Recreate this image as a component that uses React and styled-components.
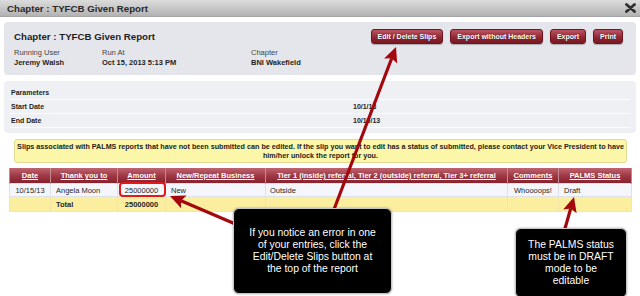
import React from "react";
import styled, { createGlobalStyle } from "styled-components";

const GlobalStyle = createGlobalStyle`
  html, body { margin: 0; padding: 0; background: #fff; }
  body { font-family: "Liberation Sans", Arial, sans-serif; color: #222; }
`;

const Page = styled.div`
  position: relative;
  width: 640px;
  height: 296px;
  overflow: hidden;
  background: #fff;
`;

const TitleBar = styled.div`
  height: 17px;
  display: flex;
  align-items: center;
  justify-content: space-between;
  padding: 0 4px 0 7px;
  background: linear-gradient(#dcdcdc, #b2b2b2);
  border-bottom: 1px solid #a5a5a5;
  box-sizing: border-box;
`;

const TitleText = styled.div`
  font-size: 9.7px;
  font-weight: bold;
  color: #2a2a2a;
`;

const Body = styled.div`
  display: flex;
  flex-direction: column;
  gap: 6px;
  padding: 5px 4px 0;
`;

const ReportPanel = styled.div`
  background: #e5e6eb;
  border-radius: 4px;
  padding: 7px 13px 8px 10px;
`;

const PanelHead = styled.div`
  display: flex;
  align-items: center;
  justify-content: space-between;
  height: 15px;
`;

const Heading = styled.div`
  font-size: 9.7px;
  font-weight: bold;
  color: #1e1e1e;
`;

const ButtonRow = styled.div`
  display: flex;
  gap: 7px;
`;

const RedButton = styled.div`
  height: 15px;
  box-sizing: border-box;
  padding: 0 6px;
  display: flex;
  align-items: center;
  border-radius: 3px;
  border: 1px solid #6e1520;
  background: linear-gradient(#bb5561, #8e2531 60%, #7a1823);
  color: #fff;
  font-size: 7px;
  font-weight: bold;
  text-shadow: 0 0 1px rgba(0,0,0,0.6);
  box-shadow: 0 1px 1px rgba(0,0,0,0.25);
  white-space: nowrap;
`;

const InfoGrid = styled.div`
  display: grid;
  grid-template-columns: 88px 149px 1fr;
  margin-top: 4px;
  font-size: 7.5px;
  line-height: 9.5px;
`;

const InfoLabel = styled.div`
  color: #444;
`;

const InfoValue = styled.div`
  font-weight: bold;
  color: #1e1e1e;
`;

const ParamPanel = styled.div`
  background: #eef0f3;
  border-radius: 4px;
  padding: 5px 6px;
`;

const ParamRow = styled.div`
  display: grid;
  grid-template-columns: 342px 1fr;
  align-items: center;
  height: 13px;
  border-bottom: 1px solid #fbfcfd;
  padding-left: 1px;
  font-size: 7px;
  font-weight: bold;
  color: #1e1e1e;
`;

const Notice = styled.div`
  margin: 0 9px 0 10px;
  height: 24px;
  box-sizing: border-box;
  background: #fcf6a8;
  border: 1px solid #e2db95;
  border-radius: 3px;
  display: flex;
  align-items: center;
  justify-content: center;
  text-align: center;
  font-size: 7.2px;
  line-height: 9px;
  font-weight: bold;
  color: #222;
  white-space: nowrap;
`;

const Table = styled.table`
  margin: -1px 5px 0;
  width: 622px;
  border-collapse: collapse;
  table-layout: fixed;
  font-size: 7.5px;
`;

const HeadCell = styled.th`
  height: 15px;
  padding: 0;
  background: linear-gradient(#c06470, #9c3642 55%, #86222e);
  border-left: 1px solid #c88890;
  border-right: 1px solid #c88890;
  color: #fff;
  font-weight: bold;
  text-decoration: underline;
  text-align: center;
  white-space: nowrap;
`;

const Cell = styled.td`
  height: ${(p) => (p.$total ? "14px" : "12px")};
  padding: 0 0 0 ${(p) => p.$pad || 0}px;
  background: ${(p) => (p.$total ? "#fcee9f" : "#f4f6fb")};
  border: 1px solid ${(p) => (p.$total ? "#f3e6a8" : "#dfe1e8")};
  text-align: ${(p) => p.$align || "left"};
  font-weight: ${(p) => (p.$total ? "bold" : "normal")};
  color: #262626;
  white-space: nowrap;
`;

const AmountMark = styled.span`
  position: absolute;
  left: -6px;
  top: -4px;
  width: 47px;
  height: 15px;
  border: 2px solid #e41818;
  border-radius: 4px;
  box-sizing: border-box;
`;

const AmountWrap = styled.span`
  position: relative;
  display: inline-block;
`;

const ArrowLayer = styled.svg`
  position: absolute;
  left: 0;
  top: 0;
  width: 640px;
  height: 296px;
  pointer-events: none;
`;

const Callout = styled.div`
  position: absolute;
  left: ${(p) => p.$left}px;
  top: ${(p) => p.$top}px;
  width: ${(p) => p.$width}px;
  height: ${(p) => p.$height}px;
  box-sizing: border-box;
  background: #000;
  border: 1px solid #c8c8c8;
  border-radius: 6px;
  box-shadow: 0 0 2px rgba(0,0,0,0.4);
  display: flex;
  align-items: center;
  justify-content: center;
  text-align: center;
  color: #fff;
  font-size: 10.4px;
  line-height: 12px;
  padding: ${(p) => p.$pad || "0 6px"};
`;

function headPoints(tx, ty, sx, sy, L = 15, W = 7) {
  const dx = tx - sx;
  const dy = ty - sy;
  const len = Math.hypot(dx, dy);
  const ux = dx / len;
  const uy = dy / len;
  const bx = tx - ux * L;
  const by = ty - uy * L;
  const px = -uy;
  const py = ux;
  const nx = bx + ux * 3;
  const ny = by + uy * 3;
  return {
    pts: `${tx},${ty} ${bx + px * W},${by + py * W} ${nx},${ny} ${bx - px * W},${by - py * W}`,
    bx: nx,
    by: ny,
  };
}

function Arrow({ tx, ty, sx, sy }) {
  const h = headPoints(tx, ty, sx, sy);
  return (
    <g>
      <line x1={sx} y1={sy} x2={h.bx} y2={h.by} stroke="#a3080f" strokeWidth="3.2" />
      <polygon points={h.pts} fill="#a3080f" />
    </g>
  );
}

const CloseIcon = () => (
  <svg width="11" height="10" viewBox="0 0 11 10">
    <path d="M1.5 1.5 L9.5 8.5 M9.5 1.5 L1.5 8.5" stroke="#2e2e2e" strokeWidth="2.8" strokeLinecap="round" />
  </svg>
);

const cols = [41, 67, 48, 100, 242, 51, 73];

export default function App() {
  return (
    <Page>
      <GlobalStyle />
      <TitleBar>
        <TitleText>Chapter : TYFCB Given Report</TitleText>
        <CloseIcon />
      </TitleBar>
      <Body>
        <ReportPanel>
          <PanelHead>
            <Heading>Chapter : TYFCB Given Report</Heading>
            <ButtonRow>
              <RedButton>Edit / Delete Slips</RedButton>
              <RedButton>Export without Headers</RedButton>
              <RedButton>Export</RedButton>
              <RedButton>Print</RedButton>
            </ButtonRow>
          </PanelHead>
          <InfoGrid>
            <InfoLabel>Running User</InfoLabel>
            <InfoLabel>Run At</InfoLabel>
            <InfoLabel>Chapter</InfoLabel>
            <InfoValue>Jeremy Walsh</InfoValue>
            <InfoValue>Oct 15, 2013 5:13 PM</InfoValue>
            <InfoValue>BNI Wakefield</InfoValue>
          </InfoGrid>
        </ReportPanel>
        <ParamPanel>
          <ParamRow>
            <span>Parameters</span>
            <span />
          </ParamRow>
          <ParamRow>
            <span>Start Date</span>
            <span>10/1/13</span>
          </ParamRow>
          <ParamRow>
            <span>End Date</span>
            <span>10/15/13</span>
          </ParamRow>
        </ParamPanel>
        <Notice>
          <div>
            Slips associated with PALMS reports that have not been submitted can be edited. If the slip you want to edit has a status of submitted, please contact your Vice President to have
            <br />
            him/her unlock the report for you.
          </div>
        </Notice>
        <Table>
          <colgroup>
            {cols.map((w, i) => (
              <col key={i} style={{ width: w }} />
            ))}
          </colgroup>
          <thead>
            <tr>
              <HeadCell>Date</HeadCell>
              <HeadCell>Thank you to</HeadCell>
              <HeadCell>Amount</HeadCell>
              <HeadCell>New/Repeat Business</HeadCell>
              <HeadCell>Tier 1 (inside) referral, Tier 2 (outside) referral, Tier 3+ referral</HeadCell>
              <HeadCell>Comments</HeadCell>
              <HeadCell>PALMS Status</HeadCell>
            </tr>
          </thead>
          <tbody>
            <tr>
              <Cell $align="center">10/15/13</Cell>
              <Cell $pad={5}>Angela Moon</Cell>
              <Cell $align="center">
                <AmountWrap>
                  25000000
                  <AmountMark />
                </AmountWrap>
              </Cell>
              <Cell $pad={5}>New</Cell>
              <Cell $pad={4}>Outside</Cell>
              <Cell $pad={6}>Whoooops!</Cell>
              <Cell $pad={5}>Draft</Cell>
            </tr>
            <tr>
              <Cell $total />
              <Cell $total $pad={5}>Total</Cell>
              <Cell $total $align="center">25000000</Cell>
              <Cell $total />
              <Cell $total />
              <Cell $total />
              <Cell $total />
            </tr>
          </tbody>
        </Table>
      </Body>
      <ArrowLayer viewBox="0 0 640 296">
        <Arrow tx={396} ty={47} sx={333} sy={212} />
        <Arrow tx={170} ty={196} sx={240} sy={226} />
        <Arrow tx={574} ty={197} sx={564} sy={232} />
      </ArrowLayer>
      <Callout $left={233} $top={208} $width={159} $height={86}>
        <div>
          If you notice an error in one
          <br />
          of your entries, click the
          <br />
          Edit/Delete Slips button at
          <br />
          the top of the report
        </div>
      </Callout>
      <Callout $left={515} $top={228} $width={112} $height={70} $pad="0 4px">
        <div>
          The PALMS status
          <br />
          must be in DRAFT
          <br />
          mode to be
          <br />
          editable
        </div>
      </Callout>
    </Page>
  );
}
